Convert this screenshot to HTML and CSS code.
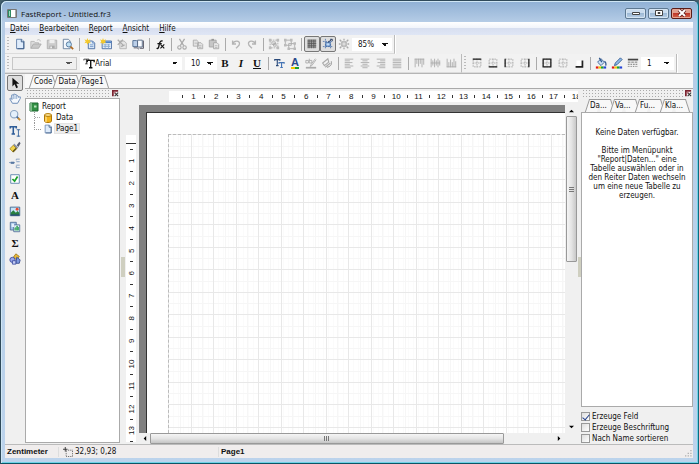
FILE: index.html
```html
<!DOCTYPE html>
<html lang="de">
<head>
    <meta charset="UTF-8">
    <meta name="viewport" content="width=device-width, initial-scale=1.0">
    <title>FastReport - Untitled.fr3</title>
    <link rel="stylesheet" href="styles.css">
</head>
<body>
    <!-- Shared icon shapes -->
    <svg class="defs" aria-hidden="true">
        <symbol id="i-page" viewBox="0 0 14 14"><path d="M3 1.5h6l2.5 2.500v8.500H3z" fill="#dfecfb" stroke="#5b7ba6"/><path d="M8.500 1.500v3h3" fill="#cfe0f4" stroke="#34547f"/><path d="M11.500 4v8.500H4" fill="none" stroke="#34547f"/></symbol>
        <symbol id="i-frame" viewBox="0 0 14 14"><path d="M2.500 2.500h9v9h-9zM7 2v10M2 7h10" fill="none" stroke="#a8a8a8" stroke-dasharray="2 1"/></symbol>
        <symbol id="i-rainbow" viewBox="0 0 14 14"><path d="M1 11h3v2.500H1z" fill="#e01818"/><path d="M4 11h3v2.500H4z" fill="#f2c500"/><path d="M7 11h3v2.500H7z" fill="#18a030"/><path d="M10 11h3v2.500h-3z" fill="#2444d8"/></symbol>
        <symbol id="i-close" viewBox="0 0 8 8"><path d="M1 7V1h6" fill="none" stroke="#7c2430" stroke-width="2"/><path d="M3 3l4 4M7 3L3 7" stroke="#333" stroke-width="1.200"/><path d="M2 2h2v2H2z" fill="#b8707a"/></symbol>
    </svg>

    <div class="window">
        <header class="titlebar">
            <svg class="app-icon" viewBox="0 0 10 9"><path d="M.5.5h9v8h-9z" fill="#fff" stroke="#777"/><path d="M1 1h3v7H1z" fill="#2e8b63"/><path d="M2 2h1v5H2z" fill="#9fd8bc"/><path d="M8 1h1v7H8z" fill="#aaa"/></svg>
            <h1>FastReport - Untitled.fr3</h1>
            <div class="window-buttons">
                <button aria-label="Minimieren"><svg viewBox="0 0 10 8"><path d="M1.500 3.500h7v2h-7z" fill="#fff" stroke="#444"/></svg></button>
                <button aria-label="Maximieren"><svg viewBox="0 0 10 8"><path d="M1.500 1.500h7v5h-7z" fill="#fff" stroke="#444"/><path d="M4 3.500h2v1H4z" fill="#888" stroke="#444"/></svg></button>
                <button class="close-btn" aria-label="Schließen"><svg viewBox="0 0 10 8"><path d="M2 1l6 6M8 1L2 7" stroke="#5a2020" stroke-width="3.500"/><path d="M2 1l6 6M8 1L2 7" stroke="#fff" stroke-width="2"/></svg></button>
            </div>
        </header>

        <div class="client">
            <nav class="menu">
                <a href="#"><u>D</u>atei</a>
                <a href="#"><u>B</u>earbeiten</a>
                <a href="#"><u>R</u>eport</a>
                <a href="#"><u>A</u>nsicht</a>
                <a href="#"><u>H</u>ilfe</a>
            </nav>

            <div class="toolbars">
                <!-- Standard toolbar -->
                <div class="toolbar-row">
                    <div class="toolbar">
                        <span class="grip"></span>
                        <button aria-label="Neu"><svg><use href="#i-page"/></svg></button>
                        <button aria-label="Öffnen" disabled><svg viewBox="0 0 14 14"><path d="M1 12V4h4l1 1.500h4V7" fill="#ddd" stroke="#b5b5b5"/><path d="M1 12l3-5h9l-3 5z" fill="#c8c8c8" stroke="#aaa"/><path d="M8 3c2-2 4-1 4 1" fill="none" stroke="#b5b5b5"/></svg></button>
                        <button aria-label="Speichern" disabled><svg viewBox="0 0 14 14"><path d="M1.500 2.500h11v10h-11z" fill="#ccc" stroke="#b0b0b0"/><path d="M4 2h6v4H4z" fill="#eee"/><path d="M4 9h6v3H4z" fill="#aaa"/><path d="M5 10h2v2H5z" fill="#eee"/></svg></button>
                        <button aria-label="Vorschau"><svg viewBox="0 0 14 14"><path d="M1.500 1.500h6l2 2v9h-8z" fill="#f4f8fd" stroke="#5f7896"/><circle cx="8" cy="7.500" r="3" fill="#bfe0f4" stroke="#4a6c94"/><path d="M10 10l3 3" stroke="#b06a20" stroke-width="2"/></svg></button>
                        <span class="sep"></span>
                        <button aria-label="Neue Seite"><svg viewBox="0 0 14 14"><path d="M5 3.500h5l2.500 2.500v6.500H5z" fill="#dceafa" stroke="#3f659b"/><path d="M10 3.500V6h2.500M7 8h4M7 10h4" fill="none" stroke="#6f94c4"/><path d="M4 0l1 2.500 2.500-1L6.500 4 8 6 5.500 5.500 4 8 3 5.500.5 6 2 4 .5 1.500 3 2.500z" fill="#f6c928"/></svg></button>
                        <button aria-label="Neuer Dialog"><svg viewBox="0 0 14 14"><path d="M2.500 3.500h11v9h-11z" fill="#e6f0fb" stroke="#3f659b"/><path d="M3 4h10v2H3z" fill="#4d82c8"/><path d="M4 8h8M4 10h8M6 7v5M10 7v5" stroke="#88a8cf"/><path d="M3.500 0l1 2.500L7 1.500 6 4l1 2-2.500-.5L3.500 8l-1-2.500L0 6l1.500-2L0 1.500l2.500 1z" fill="#f6c928"/></svg></button>
                        <button aria-label="Seite löschen" disabled><svg viewBox="0 0 14 14"><path d="M4.500 3.500h5L12 6v6.500H4.500z" fill="#e4e4e4" stroke="#b0b0b0"/><path d="M2 2l6 6M8 2L2 8M6 10l4-2" stroke="#aaa" stroke-width="1.500"/></svg></button>
                        <button aria-label="Seiteneinstellungen"><svg viewBox="0 0 14 14"><path d="M1 3h4l1.500 1v6H1z" fill="#bcd0ea" stroke="#4a678c"/><path d="M6.500 2.500h5.500v8H6.500z" fill="#fafcff" stroke="#4a5f7c"/><path d="M2 11.500h4l2 1.500M13.500 3v9H9" fill="none" stroke="#445"/></svg></button>
                        <span class="sep"></span>
                        <button aria-label="Variablen"><svg viewBox="0 0 14 14"><path d="M3 12c2 1 2.500-1 3-4s1.500-5 4-4.500M4 6.500h5" fill="none" stroke="#111" stroke-width="1.500"/><path d="M7.500 7.500l4.500 4.500M12 7.500L7.500 12" stroke="#111" stroke-width="1.300"/></svg></button>
                        <span class="sep"></span>
                        <button aria-label="Ausschneiden" disabled><svg viewBox="0 0 14 14"><path d="M4 1l5 8M10 1L5 9" stroke="#aaa" stroke-width="1.500"/><circle cx="4" cy="11" r="2" fill="none" stroke="#aaa" stroke-width="1.300"/><circle cx="10" cy="11" r="2" fill="none" stroke="#aaa" stroke-width="1.300"/></svg></button>
                        <button aria-label="Kopieren" disabled><svg viewBox="0 0 14 14"><path d="M1.500 2.500h4l2 2v5h-6zM6.500 5.500h4l2 2v5h-6z" fill="#e2e2e2" stroke="#aaa"/><path d="M8 9h3M8 11h3M3 6h3" stroke="#b5b5b5"/></svg></button>
                        <button aria-label="Einfügen" disabled><svg viewBox="0 0 14 14"><path d="M1.500 2.500h8v8h-8z" fill="#c6c6c6" stroke="#a5a5a5"/><path d="M4 1h3v2H4z" fill="#999"/><path d="M6.500 5.500h4l2 2v5h-6z" fill="#e8e8e8" stroke="#a5a5a5"/><path d="M8 9h3M8 11h3" stroke="#b5b5b5"/></svg></button>
                        <span class="sep"></span>
                        <button aria-label="Rückgängig" disabled><svg viewBox="0 0 14 14"><path d="M3 3v4h4M3 7c2-5 9-4 8 0 0 2-2 3-4 5" fill="none" stroke="#b4b4b4" stroke-width="1.500"/></svg></button>
                        <button aria-label="Wiederherstellen" disabled><svg viewBox="0 0 14 14"><path d="M11 3v4H7M11 7C9 2 2 3 3 7c0 2 2 3 4 5" fill="none" stroke="#b4b4b4" stroke-width="1.500"/></svg></button>
                        <span class="sep"></span>
                        <button aria-label="Gruppieren" disabled><svg viewBox="0 0 14 14"><path d="M2.500 2.500h9v9h-9z" fill="none" stroke="#aaa" stroke-dasharray="2 1"/><path d="M1 1h3v3H1zM10 1h3v3h-3zM1 10h3v3H1zM10 10h3v3h-3z" fill="#bbb"/><path d="M4.500 4.500h4v3h-4zM6.500 6.500h3v3h-3z" fill="#eee" stroke="#aaa"/></svg></button>
                        <button aria-label="Gruppierung aufheben" disabled><svg viewBox="0 0 14 14"><path d="M1.500 2.500h7v6h-7zM5.500 6.500h7v6h-7z" fill="#eee" stroke="#aaa"/><path d="M0 1h3v3H0zM7 1h3v3H7zM0 7h3v3H0zM11 5h3v3h-3zM4 11h3v3H4zM11 11h3v3h-3z" fill="#bbb"/></svg></button>
                        <span class="sep"></span>
                        <button class="pressed" aria-label="Gitter anzeigen"><svg viewBox="0 0 14 14"><path d="M2 2h10v10H2z" fill="#ddd"/><path d="M2.500 2v10M4.500 2v10M6.500 2v10M8.500 2v10M10.500 2v10M2 2.500h10M2 4.500h10M2 6.500h10M2 8.500h10M2 10.500h10" stroke="#555"/></svg></button>
                        <button class="pressed" aria-label="Am Gitter ausrichten"><svg viewBox="0 0 14 14"><path d="M4 1v12M10 1v12M1 4h12M1 10h12" stroke="#5579ad" stroke-dasharray="2 1"/><path d="M4.500 5.500h5v4h-5z" fill="#c3ddf8" stroke="#2b5ca0"/><path d="M7 5l4-3M10 1.500h2v2" fill="none" stroke="#235"/></svg></button>
                        <button aria-label="An Gitter anpassen" disabled><svg viewBox="0 0 14 14"><path d="M4.500 4.500h5v5h-5z" fill="#ddd" stroke="#999"/><path d="M2 2l2 2M12 2l-2 2M2 12l2-2M12 12l-2-2M7 1v2M7 11v2M1 7h2M11 7h2" stroke="#aaa" stroke-width="1.500"/></svg></button>
                        <select class="zoom" aria-label="Zoom"><option>85%</option></select>
                    </div>
                </div>

                <!-- Text and frame toolbars -->
                <div class="toolbar-row">
                    <div class="toolbar">
                        <span class="grip"></span>
                        <select class="style" aria-label="Stil" disabled><option></option></select>
                        <div class="font-box">
                            <svg viewBox="0 0 14 14"><path d="M1 4V2.500h6V4M4 2.500V8M2.500 8h3" fill="none" stroke="#333"/><path d="M5 6V4h8v2M9 4v8M7 12.500h4" fill="none" stroke="#111" stroke-width="1.600"/></svg>
                            <select class="font" aria-label="Schriftart"><option>Arial</option></select>
                        </div>
                        <select class="size" aria-label="Schriftgröße"><option>10</option></select>
                        <button class="letter" aria-label="Fett"><b>B</b></button>
                        <button class="letter" aria-label="Kursiv"><i>I</i></button>
                        <button class="letter" aria-label="Unterstrichen"><u>U</u></button>
                        <span class="sep"></span>
                        <button aria-label="Schrift"><svg viewBox="0 0 14 14"><path d="M2 4.500V3h6v1.500M5 3v7M3.500 10h3" fill="none" stroke="#2b4a7a" stroke-width="1.300"/><path d="M7 8V6.500h6V8M10 6.500V12M8.500 12.300h3" fill="none" stroke="#4574b5" stroke-width="1.300"/></svg></button>
                        <button class="letter" aria-label="Schriftfarbe"><span class="color-a">A</span></button>
                        <button aria-label="Hervorheben" disabled><svg viewBox="0 0 14 14"><path d="M1 4h3v3H1zM5 2v5h3V4H5M12 2L7 9l-1 2 2-1 5-7" fill="none" stroke="#aaa"/><path d="M1 12.500h12" stroke="#aaa" stroke-width="2"/></svg></button>
                        <button aria-label="Drehen" disabled><svg viewBox="0 0 14 14"><path d="M2 7l6-5 1 4-5 4zM5 12l6-5" fill="none" stroke="#aaa" stroke-width="1.300"/><path d="M12 5c1 4-1 6-5 7" fill="none" stroke="#888"/></svg></button>
                        <span class="sep"></span>
                        <button aria-label="Linksbündig" disabled><svg viewBox="0 0 14 14"><path d="M2 2.500h10M2 4.500h6M2 6.500h9M2 8.500h6M2 10.500h10M2 12.500h7" stroke="#aaa"/></svg></button>
                        <button aria-label="Zentriert" disabled><svg viewBox="0 0 14 14"><path d="M2 2.500h10M4 4.500h6M2 6.500h10M4 8.500h6M2 10.500h10M4 12.500h6" stroke="#aaa"/></svg></button>
                        <button aria-label="Rechtsbündig" disabled><svg viewBox="0 0 14 14"><path d="M2 2.500h10M6 4.500h6M3 6.500h9M6 8.500h6M2 10.500h10M5 12.500h7" stroke="#aaa"/></svg></button>
                        <button aria-label="Blocksatz" disabled><svg viewBox="0 0 14 14"><path d="M2 2.500h10M2 4.500h10M2 6.500h10M2 8.500h10M2 10.500h10M2 12.500h10" stroke="#aaa"/></svg></button>
                        <span class="sep"></span>
                        <button aria-label="Oben" disabled><svg viewBox="0 0 14 14"><path d="M2.500 2v10M4.500 2v6M6.500 2v9M8.500 2v6M10.500 2v10M12.500 2v7M2 2.500h11" stroke="#aaa"/></svg></button>
                        <button aria-label="Mitte" disabled><svg viewBox="0 0 14 14"><path d="M2.500 2v10M4.500 4v6M6.500 2v10M8.500 4v6M10.500 2v10M12.500 4v6M2 7h11" stroke="#aaa"/></svg></button>
                        <button aria-label="Unten" disabled><svg viewBox="0 0 14 14"><path d="M2.500 2v10M4.500 6v6M6.500 3v9M8.500 6v6M10.500 2v10M12.500 5v7M2 11.500h11" stroke="#aaa"/></svg></button>
                    </div>
                    <div class="toolbar">
                        <span class="grip"></span>
                        <button aria-label="Rahmen oben"><svg viewBox="0 0 14 14"><use href="#i-frame"/><path d="M2 2.500h10" stroke="#222" stroke-width="1.500"/></svg></button>
                        <button aria-label="Rahmen unten"><svg viewBox="0 0 14 14"><use href="#i-frame"/><path d="M2 11.500h10" stroke="#222" stroke-width="1.500"/></svg></button>
                        <button aria-label="Rahmen links"><svg viewBox="0 0 14 14"><use href="#i-frame"/><path d="M2.500 2v10" stroke="#222" stroke-width="1.500"/></svg></button>
                        <button aria-label="Rahmen rechts"><svg viewBox="0 0 14 14"><use href="#i-frame"/><path d="M11.500 2v10" stroke="#222" stroke-width="1.500"/></svg></button>
                        <span class="sep"></span>
                        <button aria-label="Alle Rahmen"><svg viewBox="0 0 14 14"><use href="#i-frame"/><path d="M2.500 2.500h9v9h-9z" fill="none" stroke="#222" stroke-width="1.500"/></svg></button>
                        <button aria-label="Kein Rahmen"><svg><use href="#i-frame"/></svg></button>
                        <button aria-label="Schatten"><svg viewBox="0 0 14 14"><path d="M4 4h7v7H4z" fill="#fff"/><path d="M11 4v7.500H3" fill="none" stroke="#222" stroke-width="2"/></svg></button>
                        <span class="sep"></span>
                        <button aria-label="Füllfarbe"><svg viewBox="0 0 14 14"><path d="M3 6l4-4 4 4-4 4z" fill="#c9dff5" stroke="#31588d"/><path d="M5 1l3 5M11 5c2 1 2 3 1.500 5" fill="none" stroke="#31588d" stroke-width="1.500"/><use href="#i-rainbow"/></svg></button>
                        <button aria-label="Rahmenfarbe"><svg viewBox="0 0 14 14"><path d="M5 7l6-6 2 2-6 6-3 1z" fill="#8db9e8" stroke="#31588d"/><use href="#i-rainbow"/></svg></button>
                        <button aria-label="Linienart"><svg viewBox="0 0 14 14"><path d="M1 3h12" stroke="#444" stroke-width="2"/><path d="M1 6h12" stroke="#666" stroke-dasharray="3 1"/><path d="M1 8.500h12" stroke="#666" stroke-dasharray="2 1"/><path d="M1 11h12" stroke="#666" stroke-dasharray="1 1"/></svg></button>
                        <select class="width" aria-label="Linienbreite"><option>1</option></select>
                    </div>
                </div>
            </div>

            <div class="workspace">
                <!-- Object tools -->
                <div class="tools">
                    <button class="pressed" aria-label="Auswahl"><svg viewBox="0 0 14 14"><path d="M4 1v10l2.500-2.500L8.500 13l2-1-2-4H12z" fill="#111"/></svg></button>
                    <button aria-label="Hand"><svg viewBox="0 0 14 14"><path d="M4 12L1 7c0-1.500 1.500-1 2.500.5L3 3c0-1.500 1.500-1 2 0V2c.5-1.500 2-1 2 .5.5-1.500 2-1 2 .5v1c1-1.500 2.500-.5 2 1l2-.5c1 0 .5 1.500-.5 3L10 12z" fill="#f4f8fd" stroke="#5b7fb0"/><path d="M5 3v4M7 3v4M9 4v3" stroke="#8ba8cc"/></svg></button>
                    <button aria-label="Zoom"><svg viewBox="0 0 14 14"><circle cx="6" cy="6" r="4.300" fill="#e4f0fb" stroke="#8da6c2" stroke-width="1.300"/><path d="M9 9l2 2" stroke="#456ca0" stroke-width="2"/><path d="M10.500 10.500l2.500 2.500" stroke="#c58a30" stroke-width="2.200"/></svg></button>
                    <button aria-label="Text bearbeiten"><svg viewBox="0 0 14 14"><path d="M1.500 4V2h7v2M5 2v8M3 10.500h4" fill="none" stroke="#2d5c98" stroke-width="1.800"/><path d="M9 5.500h4M11 5.500v8M9 13h4" stroke="#2d5c98"/></svg></button>
                    <button aria-label="Format kopieren"><svg viewBox="0 0 14 14"><path d="M9 5l3-4 1.500 1.500L11 7z" fill="#555b70"/><path d="M6 3l5 5-2 1-4-4z" fill="#888fa0"/><path d="M5 5l4 4-4 4-4-4z" fill="#f3d44c" stroke="#a88820"/><path d="M5 13l4-4-1-1-4 4z" fill="#554c18"/></svg></button>
                    <button aria-label="Band"><svg viewBox="0 0 14 14"><path d="M0 6.500h7M8.500 4V2.500h4M8.500 10v2.500h4M8.500 5.500h4M8.500 9.500h4" fill="none" stroke="#7c98bc"/><path d="M2 5.500h4v2.500H2z" fill="#5878a2"/></svg></button>
                    <button aria-label="Kontrollkästchen"><svg viewBox="0 0 14 14"><path d="M2 2h10v10H2z" fill="#fff" stroke="#547fa8"/><path d="M4 7l2.500 2.500L10 4" fill="none" stroke="#18a028" stroke-width="2"/></svg></button>
                    <button class="letter" aria-label="Text"><b>A</b></button>
                    <button aria-label="Bild"><svg viewBox="0 0 14 14"><path d="M1.500 2.500h11v10h-11z" fill="#c6e4f8" stroke="#375f8c"/><path d="M2 9l3-3 3 3 2-2 2 2v3H2z" fill="#278040"/><path d="M2 11h10v1.500H2z" fill="#284878"/><circle cx="9.500" cy="5" r="1.700" fill="#e84830"/></svg></button>
                    <button aria-label="Subreport"><svg viewBox="0 0 14 14"><path d="M1.500 1.500h7v9h-7z" fill="#9ec0e8" stroke="#4c6c94"/><path d="M5.500 4.500h7v8h-7z" fill="#e8f2fc" stroke="#4c6c94"/><path d="M7 11V8h1v3M9 11V6h1v5M11 11V7" fill="none" stroke="#28a050"/><path d="M3 3h3v4H3z" fill="#e4f0fb"/></svg></button>
                    <button class="letter" aria-label="Summe"><b>Σ</b></button>
                    <button aria-label="Zeichnen"><svg viewBox="0 0 14 14"><path d="M8 1l4 3-3 4-4-3z" fill="#e8b838" stroke="#a07818"/><circle cx="4" cy="8" r="3" fill="#98a6ea" stroke="#3c4ca0"/><path d="M9 5l4 3-1 4H8z" fill="#7d98e0" stroke="#34488c"/><path d="M4 9h4v4H4z" fill="#c5cef4" stroke="#3c4ca0"/></svg></button>
                </div>

                <div class="main">
                    <div class="tabs page-tabs" role="tablist">
                        <button role="tab">Code</button>
                        <button role="tab">Data</button>
                        <button role="tab" aria-selected="true">Page1</button>
                    </div>

                    <div class="panes">
                        <!-- Report tree -->
                        <aside class="panel">
                            <div class="panel-head"><span class="dots"></span><button aria-label="Schließen"><svg><use href="#i-close"/></svg></button></div>
                            <div class="tree">
                                <div class="node"><svg viewBox="0 0 10 10"><path d="M1 1h8v8H1z" fill="#329044" stroke="#1c6830"/><path d="M2 1v8" stroke="#c8e8cc"/><path d="M5 3.500h2.500v2H5z" fill="#b8e4bc"/></svg><span>Report</span></div>
                                <ul>
                                    <li class="node"><svg viewBox="0 0 10 10"><path d="M1.500 2v6c0 2 7 2 7 0V2" fill="#f3b41c" stroke="#b07808"/><path d="M3 3v6" stroke="#fff0b0"/><ellipse cx="5" cy="2" rx="3.500" ry="1.400" fill="#ffe89a" stroke="#b07808"/></svg><span>Data</span></li>
                                    <li class="node selected"><svg><use href="#i-page"/></svg><span>Page1</span></li>
                                </ul>
                            </div>
                        </aside>
                        <div class="splitter"></div>

                        <!-- Designer -->
                        <section class="designer">
                            <div class="ruler ruler-h" id="ruler-h"></div>
                            <div class="ruler ruler-v" id="ruler-v"></div>
                            <div class="canvas"><div class="paper"><div class="grid"></div></div></div>
                            <div class="scroll scroll-v">
                                <button aria-label="Nach oben"><svg viewBox="0 0 6 6"><path d="M0 5l3-3 3 3z"/></svg></button>
                                <div class="thumb"></div><div class="track"></div>
                                <button aria-label="Nach unten"><svg viewBox="0 0 6 6"><path d="M0 1l3 3 3-3z"/></svg></button>
                            </div>
                            <div class="scroll scroll-h">
                                <button aria-label="Nach links"><svg viewBox="0 0 6 6"><path d="M5 0L2 3l3 3z"/></svg></button>
                                <div class="thumb"></div><div class="track"></div>
                                <button aria-label="Nach rechts"><svg viewBox="0 0 6 6"><path d="M1 0l3 3-3 3z"/></svg></button>
                            </div>
                        </section>
                        <div class="splitter narrow"></div>

                        <!-- Data panel -->
                        <aside class="panel data-panel">
                            <div class="panel-head"><span class="dots"></span><button aria-label="Schließen"><svg><use href="#i-close"/></svg></button></div>
                            <div class="tabs" role="tablist">
                                <button role="tab" aria-selected="true">Da...</button>
                                <button role="tab">Va...</button>
                                <button role="tab">Fu...</button>
                                <button role="tab">Kla...</button>
                            </div>
                            <div class="hint">
                                <p>Keine Daten verfügbar.</p>
                                <p>Bitte im Menüpunkt<br>"Report|Daten..." eine<br>Tabelle auswählen oder in<br>den Reiter Daten wechseln<br>um eine neue Tabelle zu<br>erzeugen.</p>
                            </div>
                            <div class="options">
                                <label><input type="checkbox" checked>Erzeuge Feld</label>
                                <label><input type="checkbox">Erzeuge Beschriftung</label>
                                <label><input type="checkbox">Nach Name sortieren</label>
                            </div>
                        </aside>
                    </div>
                </div>
            </div>

            <footer class="status">
                <span class="unit">Zentimeter</span>
                <span class="coords"><svg viewBox="0 0 11 11"><path d="M0 2.500h5M2.500 0v5" stroke="#333"/><path d="M3.500 3.500h7v7h-7z" fill="none" stroke="#555" stroke-dasharray="1 1"/></svg>32,93; 0,28</span>
                <span class="page-name">Page1</span>
                <svg class="resize" viewBox="0 0 8 8"><path d="M6 0h1.500v1.500H6zM6 3h1.500v1.500H6zM6 6h1.500v1.500H6zM3 3h1.500v1.500H3zM3 6h1.500v1.500H3zM0 6h1.500v1.500H0z" fill="#b0b0b0"/></svg>
            </footer>
        </div>
    </div>

    <script>
        const CM = 22.5;

        // Fill a ruler with a tick and a number per centimetre
        function fillRuler(ruler, length) {
            for (let i = 1; (i - 1) * CM < length; i++) {
                const cell = document.createElement("div");
                cell.classList.add("cm");
                // The last cell keeps only its tick when the number has no room
                const label = i * CM - 8 < length ? i : "";
                cell.innerHTML = `<i></i><span>${label}</span>`;
                ruler.appendChild(cell);
            }
        }

        const rulerH = document.getElementById("ruler-h");
        const rulerV = document.getElementById("ruler-v");
        fillRuler(rulerH, rulerH.clientWidth - 8);
        fillRuler(rulerV, rulerV.clientHeight - 8);
    </script>
</body>
</html>
```
FILE: styles.css
```css
* {
    box-sizing: border-box;
}

body {
    margin: 0;
    height: 100vh;
    overflow: hidden;
    background: #45606c;
    color: #111;
    font-family: "DejaVu Sans Condensed", "DejaVu Sans", sans-serif;
    font-size: 8px;
    line-height: 9px;
}

button, select, input {
    margin: 0;
    padding: 0;
    border: none;
    background: none;
    color: inherit;
    font: inherit;
}

svg {
    display: block;
    flex: none;
}

.defs {
    display: none;
}

/* Window frame */
.window {
    display: flex;
    flex-direction: column;
    height: 100vh;
    padding: 0 5px 5px 4px;
    border: 1px solid #2f4a5a;
    border-right-color: #0e6a80;
    border-bottom-color: #0b5566;
    border-radius: 6px 6px 0 0;
    background: linear-gradient(#8fb0d4, #b5cce6 21px, #b9d1ea 60%, #bcd3ec);
    box-shadow: inset 1px 1px #cfe6f4, inset -1px -1px #6fd2e6;
}

.titlebar {
    display: flex;
    align-items: center;
    flex: none;
    height: 21px;
    padding: 3px 1px 0 2px;
}

.app-icon {
    width: 10px;
    height: 9px;
}

.titlebar h1 {
    margin: 0 auto 0 4px;
    font-family: "Open Sans", sans-serif;
    font-size: 8px;
    font-weight: normal;
}

.window-buttons {
    display: flex;
    gap: 2px;
}

.window-buttons button {
    display: flex;
    align-items: center;
    justify-content: center;
    width: 21px;
    height: 11px;
    border: 1px solid #5d7891;
    border-radius: 2px;
    background: linear-gradient(#cadcee 50%, #9db9d5 50%, #b9d0e8);
    box-shadow: inset 0 0 0 1px #d5e4f2;
}

.window-buttons .close-btn {
    border-color: #5a1d18;
    background: linear-gradient(#e0a090 50%, #c0392b 50%, #d4664c);
    box-shadow: inset 0 0 0 1px #e5a595;
}

.window-buttons svg {
    width: 10px;
    height: 8px;
}

.client {
    display: flex;
    flex-direction: column;
    flex: 1;
    min-height: 0;
    background: #f0f0f0;
}

.menu {
    display: flex;
    align-items: center;
    gap: 10px;
    height: 13px;
    padding: 0 5px;
    background: linear-gradient(#fff, #f0f3fa 50%, #d8dff0 50%, #dfe6f5);
}

.menu a {
    color: inherit;
    text-decoration: none;
}

/* Toolbars */
.toolbar-row {
    display: flex;
    height: 19px;
}

.toolbar {
    display: flex;
    align-items: center;
    padding: 0 2px;
    border-right: 1px solid #bbb;
    border-bottom: 1px solid #dcdcdc;
    background: #f2f2f2;
    box-shadow: 1px 0 #fff;
}

.grip {
    width: 2px;
    height: 14px;
    margin-right: 3px;
    background: repeating-linear-gradient(#bbb 0 1px, transparent 1px 3px);
}

.sep {
    width: 1px;
    height: 13px;
    margin: 0 2px 0 3px;
    background: #aaa;
}

.toolbar button, .tools button {
    display: flex;
    align-items: center;
    justify-content: center;
    width: 16px;
    height: 16px;
    border-radius: 2px;
}

.toolbar svg, .tools svg {
    width: 12px;
    height: 12px;
}

.toolbar .pressed, .tools .pressed {
    border: 1px solid #777;
    background: #dedede;
}

.toolbar .letter, .tools .letter {
    font-family: "Liberation Serif", serif;
    font-size: 11px;
    font-weight: bold;
}

.color-a {
    border-bottom: 2px solid;
    border-image: linear-gradient(90deg, #e01818 25%, #f2c500 25% 50%, #18a030 50% 75%, #2444d8 75%) 2;
    color: #2b4a8a;
    font-family: "Liberation Sans", sans-serif;
    line-height: 9px;
}

select {
    appearance: none;
    height: 13px;
    padding-left: 6px;
    background: linear-gradient(45deg, transparent 50%, #111 50%) right 7px center / 3px 3px no-repeat,
        linear-gradient(-45deg, transparent 50%, #111 50%) right 4px center / 3px 3px no-repeat,
        #fff;
}

.zoom {
    width: 40px;
}

.style {
    width: 65px;
    border: 1px solid #b5b5b5;
    opacity: 0.7;
    background-color: #f0f0f0;
}

.font-box {
    display: flex;
    align-items: center;
    width: 102px;
    height: 13px;
    margin: 0 3px;
    padding-left: 3px;
    background: #fff;
}

.font {
    flex: 1;
    padding-left: 0;
}

.size {
    width: 32px;
}

.width {
    width: 33px;
}

/* Workspace */
.workspace {
    display: flex;
    flex: 1;
    min-height: 0;
    border-top: 1px solid #b5b5b5;
}

.tools {
    flex: none;
    width: 20px;
    padding: 1px 2px 0;
}

.main {
    display: flex;
    flex-direction: column;
    flex: 1;
    min-width: 0;
}

.tabs {
    display: flex;
}

.tabs button {
    position: relative;
    isolation: isolate;
    height: 13px;
    padding: 0 2px 0 4px;
}

.tabs button::before, .tabs button::after {
    content: "";
    position: absolute;
    z-index: -1;
    top: 0;
    bottom: 0;
    border-top: 1px solid #999;
    background: #f8f8f8;
}

.tabs button::before {
    left: 1px;
    right: 50%;
    border-left: 1px solid #999;
    transform: skewX(-18deg);
}

.tabs button::after {
    left: 50%;
    right: -1px;
    border-right: 1px solid #999;
    transform: skewX(18deg);
}

.page-tabs {
    align-items: flex-end;
    height: 15px;
    padding-left: 5px;
    border-bottom: 1px solid #aaa;
    background: #f8f8f8;
}

.panes {
    display: flex;
    flex: 1;
    min-height: 0;
}

.panel {
    display: flex;
    flex-direction: column;
    flex: none;
    width: 95px;
    padding-bottom: 1px;
}

.panel-head {
    display: flex;
    align-items: center;
    flex: none;
    height: 9px;
    padding: 0 1px 0 2px;
    gap: 2px;
}

.dots {
    flex: 1;
    height: 7px;
    background:
        repeating-linear-gradient(90deg, transparent 0 1px, #f0f0f0 1px 3px),
        repeating-linear-gradient(#aaa 0 1px, transparent 1px 3px);
}

.panel-head svg {
    width: 7px;
    height: 7px;
}

.tree {
    flex: 1;
    padding: 2px 3px;
    border: 1px solid #aaa;
    background: #fff;
}

.node {
    display: flex;
    align-items: center;
    gap: 2px;
    height: 11px;
}

.node svg {
    width: 10px;
    height: 10px;
}

.node span {
    padding: 0 1px;
}

.tree ul {
    margin: 0 0 0 5px;
    padding: 0;
    list-style: none;
}

.tree li::before {
    content: "";
    align-self: flex-start;
    width: 6px;
    height: 6px;
    border-left: 1px dotted #999;
    border-bottom: 1px dotted #999;
}

.tree li:first-child::before {
    height: 11px;
    border-bottom: none;
    background: linear-gradient(90deg, #aaa 50%, transparent 50%) 0 5px / 2px 1px repeat-x;
}

.selected span {
    background: #eee;
    box-shadow: 0 0 0 1px #e4e4e4;
}

.splitter {
    flex: none;
    width: 5px;
    background: linear-gradient(#cfcfc0, #cfcfc0) 1px 50% / 4px 20px no-repeat;
}

.splitter.narrow {
    width: 3px;
    background-position: 0 50%;
}

/* Designer */
.designer {
    display: grid;
    grid-template-columns: 14px 1fr 13px;
    grid-template-rows: 16px 1fr 11px;
    flex: 1;
    min-width: 0;
}

.ruler {
    display: flex;
    overflow: hidden;
    min-width: 0;
    min-height: 0;
    background: #fff;
    font-family: "Liberation Sans", sans-serif;
    font-size: 8px;
}

.ruler-h {
    grid-area: 1 / 2 / 2 / 4;
    height: 11px;
    margin: 2px 0 0 30px;
    padding-left: 8px;
}

.ruler-v {
    grid-area: 2 / 1 / 4 / 2;
    flex-direction: column;
    width: 10px;
    margin: 30px 0 2px 1px;
}

.ruler-v::before {
    content: "";
    flex: none;
    height: 8px;
    border-bottom: 1px solid #333;
}

.cm {
    display: flex;
    flex: none;
}

.cm i, .cm span {
    display: flex;
    align-items: center;
    justify-content: center;
    flex: 1 1 0;
    min-width: 0;
    min-height: 0;
}

.cm i::before {
    content: "";
    width: 1px;
    height: 3px;
    background: #333;
}

.ruler-h .cm {
    width: 22px;
}

.ruler-h .cm:nth-child(even) {
    width: 23px;
}

.ruler-v .cm {
    flex-direction: column;
    height: 22px;
}

.ruler-v .cm:nth-child(even) {
    height: 23px;
}

.ruler-v .cm i::before {
    width: 3px;
    height: 1px;
}

.ruler-v .cm span {
    writing-mode: vertical-rl;
    transform: rotate(180deg);
}

.canvas {
    grid-area: 2 / 2;
    display: flex;
    padding: 7px 0 0 7px;
    background: #808080;
}

.paper {
    display: flex;
    flex: 1;
    padding: 21px 0 0 21px;
    border-top: 1px solid #333;
    border-left: 1px solid #333;
    background: #fff;
}

.grid {
    flex: 1;
    border-top: 1px dashed #bbb;
    border-left: 1px dashed #bbb;
    background:
        linear-gradient(90deg, transparent 22px, #e8e8e8 22px 23px, transparent 23px 44px, #e8e8e8 44px) 0 0 / 45px 45px,
        linear-gradient(transparent 22px, #e8e8e8 22px 23px, transparent 23px 44px, #e8e8e8 44px) 0 0 / 45px 45px,
        linear-gradient(90deg, transparent 11px, #f6f6f6 11px 12px, transparent 12px 33px, #f6f6f6 33px 34px, transparent 34px) 0 0 / 45px 45px,
        linear-gradient(transparent 11px, #f6f6f6 11px 12px, transparent 12px 33px, #f6f6f6 33px 34px, transparent 34px) 0 0 / 45px 45px,
        repeating-linear-gradient(90deg, transparent 0 4px, #fbfbfb 4px 5px);
}

.scroll {
    display: flex;
    background: #f0f0f0;
}

.scroll button {
    display: flex;
    align-items: center;
    justify-content: center;
    flex: none;
    width: 11px;
    height: 11px;
}

.scroll svg {
    width: 5px;
    height: 5px;
}

.scroll-v {
    grid-area: 2 / 3;
    flex-direction: column;
    padding-left: 1px;
}

.scroll-h {
    grid-area: 3 / 2;
}

.thumb {
    border: 1px solid #999;
    border-radius: 1px;
}

.scroll-v .thumb {
    flex: 9;
    width: 11px;
    background:
        repeating-linear-gradient(#777 0 1px, transparent 1px 2px) center / 5px 5px no-repeat,
        linear-gradient(90deg, #f5f5f5, #e4e4e4 50%, #c8c8c8);
}

.scroll-v .track {
    flex: 10;
}

.scroll-h .thumb {
    flex: 7;
    height: 11px;
    background:
        repeating-linear-gradient(90deg, #777 0 1px, transparent 1px 2px) center / 6px 5px no-repeat,
        linear-gradient(#f5f5f5, #e4e4e4 50%, #c4c4c4);
}

.scroll-h .track {
    flex: 1;
}

/* Data panel */
.data-panel {
    width: 112px;
}

.data-panel .tabs {
    flex: none;
    padding: 1px 0 0 5px;
}

.data-panel .tabs button {
    flex: 0 1 25px;
    text-align: left;
}

.hint {
    flex: 1;
    padding: 15px 4px;
    border: 1px solid #aaa;
    background: #fff;
    text-align: center;
}

.hint p {
    margin: 0 0 9px;
}

.options {
    display: flex;
    flex-direction: column;
    flex: none;
    gap: 1px;
    padding-top: 4px;
}

.options label {
    display: flex;
    align-items: center;
    gap: 2px;
    height: 10px;
}

.options input {
    appearance: none;
    flex: none;
    display: flex;
    width: 9px;
    height: 9px;
    border: 1px solid #999;
    background: linear-gradient(135deg, #ddd, #fff);
}

.options input:checked::before {
    content: "";
    width: 3px;
    height: 6px;
    margin-left: 2px;
    border: solid #24418c;
    border-width: 0 1px 1px 0;
    transform: rotate(40deg);
}

/* Status bar */
.status {
    display: flex;
    align-items: center;
    flex: none;
    height: 14px;
    border-top: 1px solid #bbb;
    background: #f0eded;
}

.unit, .page-name {
    padding-left: 2px;
    font-family: "Liberation Sans", sans-serif;
    font-weight: bold;
}

.unit {
    width: 53px;
}

.coords {
    display: flex;
    align-items: center;
    gap: 2px;
    width: 161px;
    padding-left: 4px;
    border-left: 1px solid #ddd;
    border-right: 1px solid #ddd;
}

.coords svg {
    width: 10px;
    height: 10px;
}

.resize {
    width: 7px;
    height: 7px;
    margin: 4px 1px 0 auto;
}
```
